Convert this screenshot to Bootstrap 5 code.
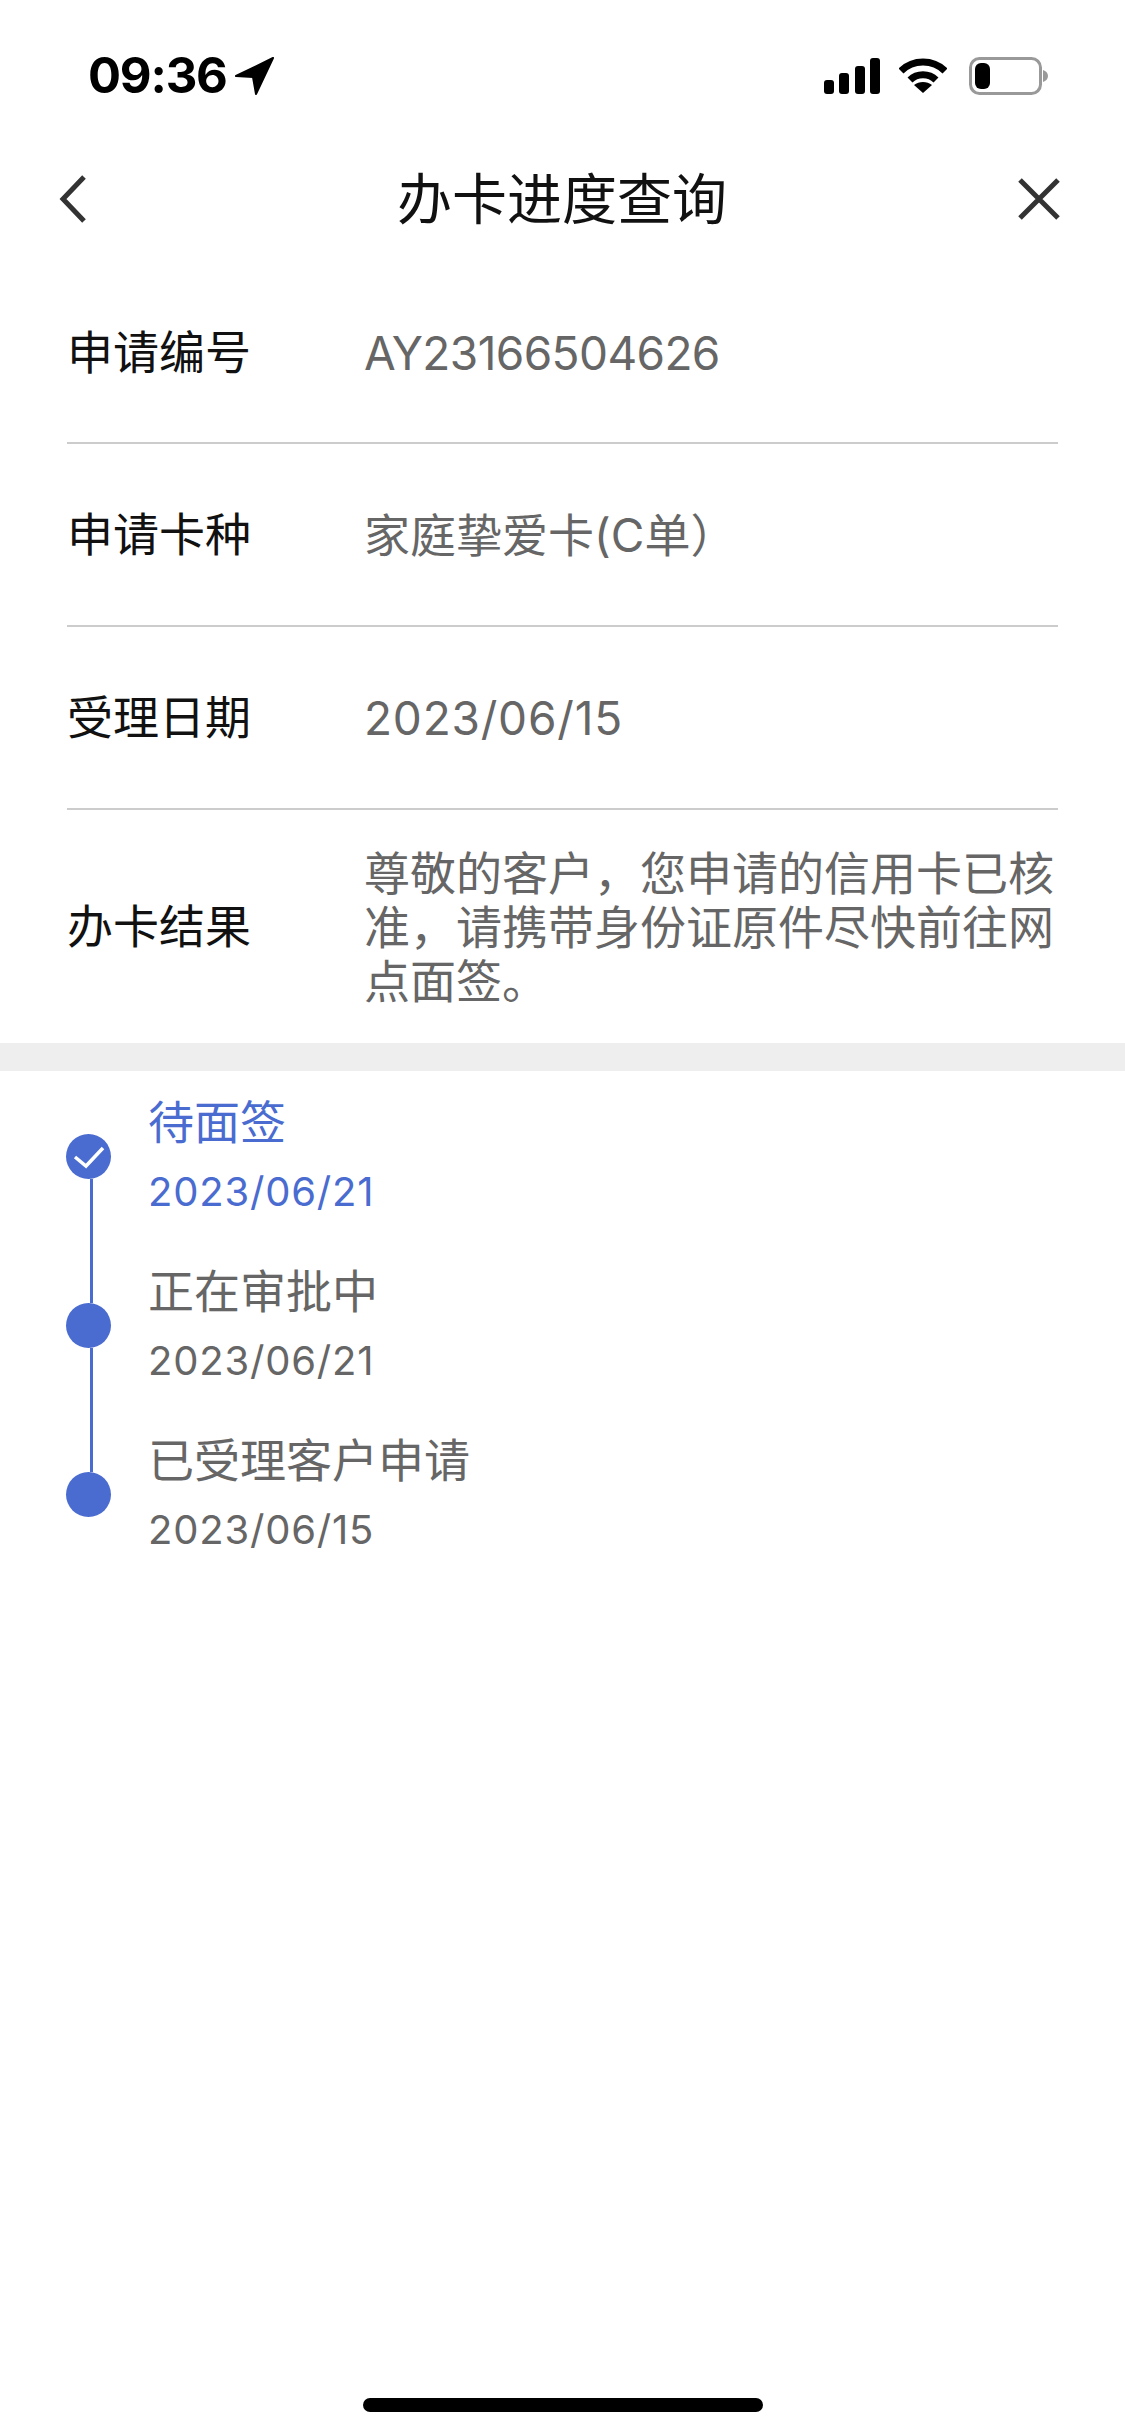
<!DOCTYPE html>
<html lang="zh-CN">
<head>
  <meta charset="UTF-8" />
  <meta name="viewport" content="width=device-width, initial-scale=1" />
  <title>办卡进度查询</title>
  <link href="https://cdn.jsdelivr.net/npm/bootstrap@5.3.3/dist/css/bootstrap.min.css" rel="stylesheet" />
  <style>
    body {
      font-family: "Inter", "Noto Sans CJK SC", sans-serif;
      background: #fff;
    }
    .page-wrap { min-height: 2435px; }

    .status-bar { height: 151px; padding: 0 76px 0 88px; }
    .status-time { font-size: 49px; font-weight: 700; line-height: 1; color: #000; letter-spacing: -1.2px; }
    .status-gap { margin-left: 22px; }
    .status-gap-sm { margin-left: 19px; }

    .top-nav { height: 96px; padding: 0 65px 0 58px; }
    .nav-left { width: 60px; }
    .nav-right { width: 54px; }
    .top-title { font-size: 55px; line-height: 1; color: #111; }

    .info-list { padding: 0 67px; }
    .info-row { height: 183px; border-bottom: 2px solid #ccc; }
    .info-row:first-child { height: 197px; padding-top: 16px; }
    .info-row:last-child { height: 233px; border-bottom: 0; }
    .info-label { width: 297px; font-size: 46px; color: #111; flex-shrink: 0; }
    .info-value { font-size: 46px; line-height: 54px; color: #666; }
    .value-code { letter-spacing: -0.6px; }
    .value-date { letter-spacing: 0.8px; }

    .grey-band { height: 28px; background: #eee; }

    .track-list { padding: 63px 0 0 66px; }
    .track-item { height: 169px; }
    .track-rail { width: 45px; margin-right: 37px; flex-shrink: 0; }
    .track-dot { width: 45px; height: 45px; border-radius: 50%; background: #4a6cd0; flex-shrink: 0; }
    .track-line { width: 3px; flex-grow: 1; margin-left: 24px; background: #4a6cd0; }
    .track-text { margin-top: -39px; color: #666; }
    .track-text.is-current { color: #4a6cd0; }
    .track-name { font-size: 46px; line-height: 54px; }
    .track-date { font-size: 40px; line-height: 50px; margin-top: 18px; letter-spacing: 0.8px; }

    .home-bar { width: 400px; height: 14px; border-radius: 7px; background: #000; margin-bottom: 23px; }
  </style>
</head>
<body>
<div class="page-wrap d-flex flex-column">

  <!-- status bar -->
  <div class="status-bar d-flex align-items-center justify-content-between">
    <div class="d-flex align-items-center gap-2">
      <span class="status-time">09:36</span>
      <svg width="40" height="38" viewBox="0 0 40 38"><path d="M38 1 1 19l17 1 3 17z" fill="#000" stroke="#000" stroke-width="2" stroke-linejoin="round"/></svg>
    </div>
    <div class="d-flex align-items-center">
      <svg width="56" height="36" viewBox="0 0 56 36" fill="#000">
        <rect x="0" y="22" width="10" height="14" rx="3"/>
        <rect x="15" y="15" width="10" height="21" rx="3"/>
        <rect x="31" y="8" width="10" height="28" rx="3"/>
        <rect x="46" y="0" width="10" height="36" rx="3"/>
      </svg>
      <svg class="status-gap-sm" width="48" height="36" viewBox="0 0 48 36" fill="none" stroke="#000" stroke-width="7">
        <path d="M2 13C14 1 34 1 46 13"/>
        <path d="M11 22c7-7 19-7 26 0"/>
        <path d="M24 35 15 27c5-4 13-4 18 0z" fill="#000" stroke="none"/>
      </svg>
      <svg class="status-gap" width="80" height="38" viewBox="0 0 80 38">
        <rect x="1.5" y="1.5" width="70" height="35" rx="9" fill="none" stroke="#999" stroke-width="3"/>
        <rect x="6" y="6" width="15" height="26" rx="6" fill="#000"/>
        <path d="M74 13c3 1 5 3 5 6s-2 5-5 6z" fill="#999"/>
      </svg>
    </div>
  </div>

  <!-- nav -->
  <div class="top-nav d-flex align-items-center justify-content-between">
    <div class="nav-left d-flex">
      <svg width="30" height="48" viewBox="0 0 30 48" fill="none" stroke="#333" stroke-width="5"><path d="M26 2 5 24l21 22"/></svg>
    </div>
    <div class="top-title">办卡进度查询</div>
    <div class="nav-right d-flex justify-content-end">
      <svg width="42" height="42" viewBox="0 0 42 42" fill="none" stroke="#333" stroke-width="5"><path d="M2 2l38 38M40 2 2 40"/></svg>
    </div>
  </div>

  <!-- application info -->
  <div class="info-list">
    <div class="info-row d-flex align-items-center">
      <div class="info-label">申请编号</div>
      <div class="info-value value-code">AY23166504626</div>
    </div>
    <div class="info-row d-flex align-items-center">
      <div class="info-label">申请卡种</div>
      <div class="info-value">家庭挚爱卡(C单）</div>
    </div>
    <div class="info-row d-flex align-items-center">
      <div class="info-label">受理日期</div>
      <div class="info-value value-date">2023/06/15</div>
    </div>
    <div class="info-row d-flex align-items-center">
      <div class="info-label">办卡结果</div>
      <div class="info-value">尊敬的客户，您申请的信用卡已核准，请携带身份证原件尽快前往网点面签。</div>
    </div>
  </div>

  <div class="grey-band"></div>

  <!-- progress -->
  <div class="track-list">
    <div class="track-item d-flex">
      <div class="track-rail d-flex flex-column">
        <div class="track-dot d-flex align-items-center justify-content-center">
          <svg width="32" height="24" viewBox="0 0 32 24" fill="none" stroke="#fff" stroke-width="3.5"><path d="M2 12l11 9L30 3"/></svg>
        </div>
        <div class="track-line"></div>
      </div>
      <div class="track-text is-current">
        <div class="track-name">待面签</div>
        <div class="track-date">2023/06/21</div>
      </div>
    </div>
    <div class="track-item d-flex">
      <div class="track-rail d-flex flex-column">
        <div class="track-dot"></div>
        <div class="track-line"></div>
      </div>
      <div class="track-text">
        <div class="track-name">正在审批中</div>
        <div class="track-date">2023/06/21</div>
      </div>
    </div>
    <div class="track-item d-flex">
      <div class="track-rail d-flex flex-column">
        <div class="track-dot"></div>
      </div>
      <div class="track-text">
        <div class="track-name">已受理客户申请</div>
        <div class="track-date">2023/06/15</div>
      </div>
    </div>
  </div>

  <div class="home-bar mt-auto mx-auto"></div>
</div>
<script src="https://cdn.jsdelivr.net/npm/bootstrap@5.3.3/dist/js/bootstrap.bundle.min.js"></script>
</body>
</html>
